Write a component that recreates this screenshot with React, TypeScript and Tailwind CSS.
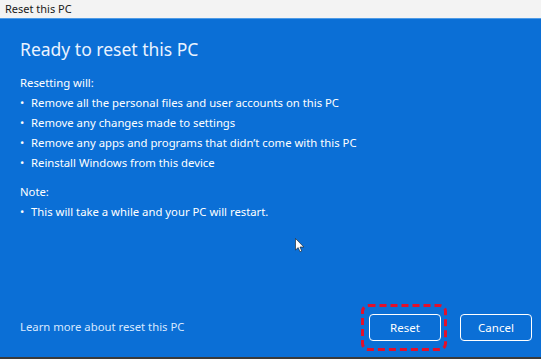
import React from 'react';

const WILL = [
  'Remove all the personal files and user accounts on this PC',
  'Remove any changes made to settings',
  "Remove any apps and programs that didn\u2019t come with this PC",
  'Reinstall Windows from this device',
];

function Bullet({ text }: { text: string }) {
  return (
    <li className="flex h-5 items-center">
      <span className="w-[11px] shrink-0">•</span>
      <span>{text}</span>
    </li>
  );
}

export default function App() {
  return (
    <div
      className="relative flex h-[359px] w-[541px] flex-col overflow-hidden bg-[#0b6fd6] text-white"
      style={{ fontFamily: '"Noto Sans", "Open Sans", sans-serif' }}
    >
      {/* title bar */}
      <div className="flex h-[19px] shrink-0 items-center border-b border-[#4f9be6] bg-[#f3f3f3] px-[5px] text-[11px] text-[#1a1a1a]">
        Reset this PC
      </div>

      <div className="flex flex-1 flex-col pl-5 pr-[9px] text-[11.3px]">
        <h1 className="mt-[16px] text-[17.5px] leading-[28px] text-[#eaf3ff]">Ready to reset this PC</h1>

        <p className="mt-[10px] leading-5">Resetting will:</p>
        <ul>
          {WILL.map((t) => (
            <Bullet key={t} text={t} />
          ))}
        </ul>

        <p className="mt-[9px] leading-5">Note:</p>
        <ul>
          <Bullet text="This will take a while and your PC will restart." />
        </ul>

        <div className="mt-auto mb-[6px] flex items-center justify-between">
          <a className="text-[11.3px] text-[#d7e8ff]">Learn more about reset this PC</a>
          <div className="flex items-center gap-[11px]">
            <div className="relative px-[8px] py-[10px]">
              <svg className="absolute inset-0" width="86" height="47" viewBox="0 0 86 47">
                <rect x="1.5" y="1.5" width="83" height="44" rx="6" fill="none" stroke="#e3102b" strokeWidth="3" strokeDasharray="7 4" />
              </svg>
              <button className="h-[27px] w-[72px] rounded-[4px] border-[1.5px] border-white bg-[#0b6fd6] text-[11.5px] text-white">
                Reset
              </button>
            </div>
            <button className="h-[27px] w-[72px] rounded-[4px] border-[1.5px] border-white bg-[#0b6fd6] text-[11.5px] text-white">
              Cancel
            </button>
          </div>
        </div>
      </div>
      <div className="h-[2px] shrink-0 bg-[#3a3a3a]" />

      {/* mouse pointer */}
      <svg className="absolute left-[295px] top-[238px]" width="10" height="15" viewBox="0 0 10 15">
        <path d="M0.5 0.5 L0.5 12 L3.2 9.6 L5 13.8 L6.7 13 L5 9 L8.8 9 Z" fill="#fff" stroke="#1a1a1a" strokeWidth="0.6" />
      </svg>
    </div>
  );
}
